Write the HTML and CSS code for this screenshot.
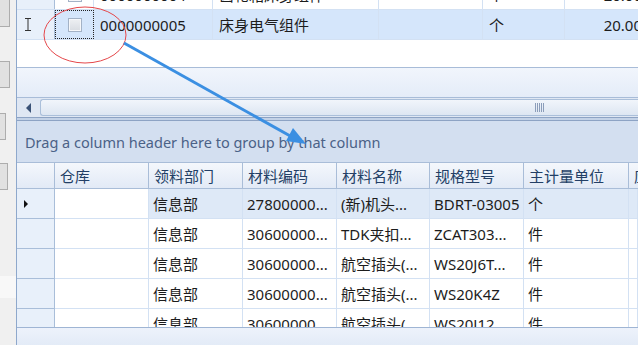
FILE: index.html
```html
<!DOCTYPE html>
<html>
<head>
<meta charset="utf-8">
<link rel="stylesheet" href="styles.css">
</head>
<body>
<div class="page">
  <aside class="side">
    <div class="sbtn b1"></div>
    <div class="sbtn b2"></div>
    <div class="sbtn b3"></div>
    <div class="sbtn b4"></div>
    <div class="sband"></div>
  </aside>
  <main class="grid">
    <section class="toprows">
      <div class="trow">
        <div class="ind"></div>
        <div class="cell chkcell"><span class="chk"></span></div>
        <div class="cell">0000000004</div>
        <div class="cell">齿轮箱床身组件</div>
        <div class="cell"></div>
        <div class="cell">个</div>
        <div class="cell num">20.00</div>
      </div>
      <div class="trow sel">
        <div class="ind"><svg width="8" height="13" viewBox="0 0 8 13"><path d="M1 0.5h6M4 0.5v12M1 12.5h6" stroke="#333" stroke-width="1" fill="none"/></svg></div>
        <div class="cell chkcell focus"><span class="chk"></span></div>
        <div class="cell">0000000005</div>
        <div class="cell">床身电气组件</div>
        <div class="cell"></div>
        <div class="cell">个</div>
        <div class="cell num">20.00</div>
      </div>
    </section>
    <div class="blank"></div>
    <div class="band"></div>
    <div class="hscroll">
      <span class="larrow"></span>
      <div class="thumb"><span class="grip"></span></div>
    </div>
    <div class="sep"></div>
    <div class="grouppanel">Drag a column header here to group by that column</div>
    <div class="hdr">
      <div class="hind"></div>
      <div class="hc">仓库</div>
      <div class="hc">领料部门</div>
      <div class="hc">材料编码</div>
      <div class="hc">材料名称</div>
      <div class="hc">规格型号</div>
      <div class="hc">主计量单位</div>
      <div class="hc">应</div>
    </div>
    <section class="rows">
      <div class="brow cur">
        <div class="bind"><span class="tri"></span></div>
        <div class="bc wh"></div>
        <div class="bc">信息部</div>
        <div class="bc">27800000...</div>
        <div class="bc">(新)机头...</div>
        <div class="bc">BDRT-03005</div>
        <div class="bc">个</div>
        <div class="bc"></div>
      </div>
      <div class="brow">
        <div class="bind"></div>
        <div class="bc"></div>
        <div class="bc">信息部</div>
        <div class="bc">30600000...</div>
        <div class="bc">TDK夹扣...</div>
        <div class="bc">ZCAT303...</div>
        <div class="bc">件</div>
        <div class="bc"></div>
      </div>
      <div class="brow">
        <div class="bind"></div>
        <div class="bc"></div>
        <div class="bc">信息部</div>
        <div class="bc">30600000...</div>
        <div class="bc">航空插头(...</div>
        <div class="bc">WS20J6T...</div>
        <div class="bc">件</div>
        <div class="bc"></div>
      </div>
      <div class="brow">
        <div class="bind"></div>
        <div class="bc"></div>
        <div class="bc">信息部</div>
        <div class="bc">30600000...</div>
        <div class="bc">航空插头(...</div>
        <div class="bc">WS20K4Z</div>
        <div class="bc">件</div>
        <div class="bc"></div>
      </div>
      <div class="brow">
        <div class="bind"></div>
        <div class="bc"></div>
        <div class="bc">信息部</div>
        <div class="bc">30600000...</div>
        <div class="bc">航空插头(...</div>
        <div class="bc">WS20J12</div>
        <div class="bc">件</div>
        <div class="bc"></div>
      </div>
    </section>
    <div class="foot"></div>
  </main>
  <svg class="annot" width="638" height="345" viewBox="0 0 638 345">
    <ellipse cx="85" cy="35" rx="41" ry="28" fill="none" stroke="#e5484b" stroke-width="1"/>
    <line x1="124" y1="43" x2="292" y2="137" stroke="#3b8fe2" stroke-width="3"/>
    <polygon points="306,144 286,141 293,128" fill="#3b8fe2"/>
  </svg>
</div>
</body>
</html>
```

FILE: styles.css
```css
* { box-sizing: border-box; }
html, body { margin: 0; padding: 0; }
body {
  width: 638px;
  height: 345px;
  overflow: hidden;
  background: #fff;
  font-family: "Noto Sans", "Noto Sans CJK SC", sans-serif;
  font-size: 15px;
  color: #1c1c1c;
}
.page {
  position: relative;
  display: flex;
  width: 638px;
  height: 345px;
}
.side {
  width: 16px;
  flex: none;
  background: #f0f0f0;
  display: flex;
  flex-direction: column;
}
.sbtn {
  width: 10px;
  background: #e1e1e1;
  border: 1px solid #adadad;
  border-left: none;
}
.b1 { height: 28px; margin-top: -1px; }
.b2 { height: 27px; margin-top: 34px; }
.b3 { height: 27px; margin-top: 25px; width: 6px; }
.b4 { height: 27px; margin-top: 23px; width: 8px; }
.sband {
  height: 22px;
  margin-top: 86px;
  background: #f8f8f8;
}
.grid {
  flex: 1;
  display: flex;
  flex-direction: column;
  border-left: 1px solid #8ea8cc;
  min-width: 0;
  overflow: hidden;
}
/* top grid */
.toprows {
  height: 40px;
  display: flex;
  flex-direction: column;
  justify-content: flex-end;
  overflow: hidden;
  flex: none;
}
.trow {
  flex: none;
  display: grid;
  grid-template-columns: 38px 39px 119px 166px 104px 82px 84px;
  height: 30px;
  border-bottom: 1px solid #d3e1f3;
  background: #fff;
}
.trow.sel { background: #d5e6fb; }
.ind {
  background: #e8f0fa;
  border-right: 1px solid #a9bed9;
  display: flex;
  align-items: center;
  padding-left: 7px;
}
.trow .cell {
  border-right: 1px solid #d3e1f3;
  padding: 0 6px;
  display: flex;
  align-items: center;
  white-space: nowrap;
  overflow: hidden;
}
.trow .cell.num { justify-content: flex-end; }
.trow .cell.chkcell { padding: 0; justify-content: center; }
.focus { outline: 1px dotted #222; outline-offset: -1px; }
.chk {
  width: 14px;
  height: 14px;
  border: 1px solid #a3b2c6;
  background: linear-gradient(#eef0f3, #d8dce2);
  box-shadow: inset 0 0 0 1px #f6f7f9;
  margin-left: 1px;
}
.blank { height: 27px; flex: none; background: #fff; }
.band {
  height: 31px;
  flex: none;
  background: linear-gradient(#f1f5fc, #e4ecf8);
  border-top: 1px solid #a8bcd8;
  border-bottom: 1px solid #a8bcd8;
}
.hscroll {
  height: 19px;
  flex: none;
  background: #dfe7f3;
  display: flex;
  align-items: center;
  padding-left: 9px;
}
.larrow {
  width: 0; height: 0;
  border-top: 5px solid transparent;
  border-bottom: 5px solid transparent;
  border-right: 5px solid #3a5277;
  margin-right: 9px;
}
.thumb {
  flex: 1;
  height: 17px;
  border: 1px solid #aabfda;
  border-right: none;
  border-radius: 3px 0 0 3px;
  background: linear-gradient(#f1f5fb, #dde6f2);
  display: flex;
  align-items: center;
  justify-content: flex-end;
  padding-right: 93px;
}
.grip {
  width: 10px;
  height: 9px;
  background: repeating-linear-gradient(90deg, #8b9dba 0 1px, transparent 1px 2px);
}
.sep {
  height: 4px;
  flex: none;
  border-top: 1px solid #8da3c4;
  border-bottom: 1px solid #8da3c4;
  background: #c3d2e7;
}
.grouppanel {
  height: 41px;
  flex: none;
  background: #d3dff0;
  color: #4b6287;
  padding-left: 8px;
  display: flex;
  align-items: center;
  font-size: 14.5px;
  white-space: nowrap;
}
.hdr {
  height: 27px;
  flex: none;
  display: grid;
  grid-template-columns: 38px 94px 94px 94px 93px 94px 105px 1fr;
  background: linear-gradient(#f4f7fc, #e2eaf6);
  border-top: 1px solid #a9bdd8;
  border-bottom: 1px solid #a9bdd8;
}
.hind, .hc {
  border-right: 1px solid #a9bdd8;
}
.hc {
  color: #233f66;
  padding: 0 5px;
  display: flex;
  align-items: center;
  white-space: nowrap;
  overflow: hidden;
}
.rows {
  height: 138px;
  flex: none;
  overflow: hidden;
}
.brow {
  display: grid;
  grid-template-columns: 38px 94px 94px 94px 93px 94px 105px 1fr;
  height: 30px;
  border-bottom: 1px solid #d3e1f3;
  background: #fff;
}
.brow.cur { background: #dee9f7; }
.bind {
  background: #e8f0fa;
  border-right: 1px solid #a9bed9;
  border-bottom: 1px solid #a9bed9;
  margin-bottom: -1px;
  display: flex;
  align-items: center;
  padding-left: 7px;
}
.tri {
  width: 0; height: 0;
  border-top: 4px solid transparent;
  border-bottom: 4px solid transparent;
  border-left: 4px solid #111;
}
.bc {
  border-right: 1px solid #d3e1f3;
  padding: 0 4px;
  display: flex;
  align-items: center;
  white-space: nowrap;
  overflow: hidden;
}
.bc.wh { background: #fff; }
.foot {
  flex: 1;
  background: linear-gradient(#edf2fb, #e3ebf7);
  border-top: 1px solid #9fb5d4;
}
.annot {
  position: absolute;
  left: 0;
  top: 0;
  pointer-events: none;
}
```
